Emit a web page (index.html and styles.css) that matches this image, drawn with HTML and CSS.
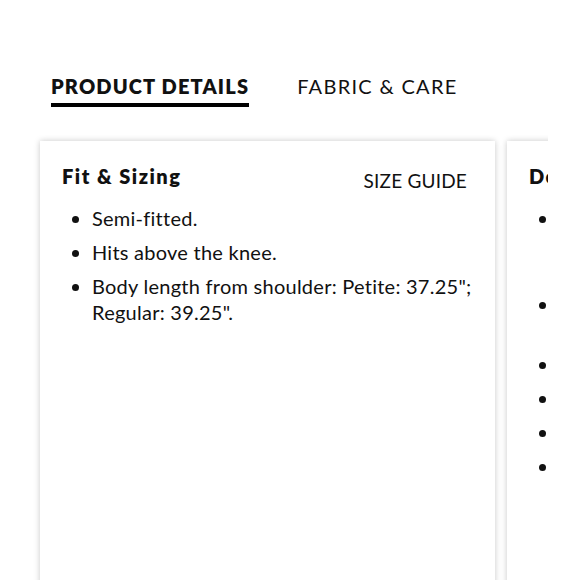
FILE: index.html
```html
<!DOCTYPE html>
<html>
<head>
<meta charset="utf-8">
<link rel="stylesheet" href="styles.css">
</head>
<body>
<div class="page">
  <nav class="tabs">
    <div class="tab active">PRODUCT DETAILS</div>
    <div class="tab">FABRIC &amp; CARE</div>
  </nav>
  <div class="viewport">
    <div class="track">
      <section class="card">
        <div class="card-head">
          <h2 class="card-title">Fit &amp; Sizing</h2>
          <a class="size-guide">SIZE GUIDE</a>
        </div>
        <ul class="list">
          <li>Semi-fitted.</li>
          <li>Hits above the knee.</li>
          <li>Body length from shoulder: Petite: 37.25"; Regular: 39.25".</li>
        </ul>
      </section>
      <section class="card">
        <div class="card-head">
          <h2 class="card-title">Details</h2>
        </div>
        <ul class="list">
          <li>Crafted in a lightweight woven fabric with a soft hand and subtle texture that drapes beautifully.</li>
          <li>V-neckline with a concealed hook-and-eye closure.</li>
          <li>Short flutter sleeves.</li>
          <li>Side seam pockets.</li>
          <li>Back zip closure.</li>
          <li>Fully lined.</li>
        </ul>
      </section>
    </div>
  </div>
</div>
</body>
</html>
```
FILE: styles.css
```css
* { box-sizing: border-box; }
html, body { margin: 0; padding: 0; background: #fff; }
body {
  font-family: "Lato", "Noto Sans", sans-serif;
  color: #111;
  width: 580px;
  height: 580px;
  overflow: hidden;
}
.page {
  padding-top: 70px;
  padding-left: 30px;
  width: 548px;
}
.tabs {
  display: flex;
  gap: 48px;
  padding-left: 21px;
}
.tab {
  font-size: 20px;
  line-height: 28px;
  letter-spacing: 1.3px;
  padding-top: 2px;
  padding-bottom: 3px;
  border-bottom: 4px solid transparent;
  color: #111;
}
.tab.active {
  font-weight: 800;
  letter-spacing: 1.15px;
  border-bottom-color: #000;
}
.viewport {
  overflow: hidden;
  margin-top: 28px;
  padding: 6px 0 0 10px;
  height: 480px;
}
.track {
  display: flex;
  gap: 12px;
}
.card {
  flex: 0 0 455px;
  height: 480px;
  background: #fff;
  box-shadow: 0 0 6px rgba(0, 0, 0, 0.22);
  padding: 22px 18px 0 22px;
}
.card-head {
  display: flex;
  justify-content: space-between;
  align-items: flex-start;
  height: 26px;
}
.card-title {
  margin: 0;
  font-size: 20px;
  line-height: 26px;
  font-weight: 800;
  letter-spacing: 1.5px;
}
.size-guide {
  font-size: 19px;
  line-height: 26px;
  margin-top: 5px;
  margin-right: 10px;
  letter-spacing: 0.2px;
  color: #111;
}
.list {
  margin: 16px 0 0;
  padding: 0 0 0 30px;
  font-size: 20px;
  line-height: 26px;
  letter-spacing: 0.25px;
}
.list li {
  margin-bottom: 8px;
}
```
